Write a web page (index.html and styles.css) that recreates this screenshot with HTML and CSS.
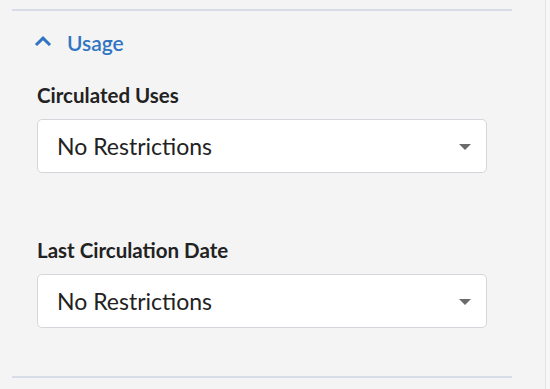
FILE: index.html
```html
<!DOCTYPE html>
<html lang="en">
<head>
    <meta charset="UTF-8">
    <meta name="viewport" content="width=device-width, initial-scale=1.0">
    <title>Usage</title>
    <link rel="stylesheet" href="styles.css">
</head>
<body>
    <div class="page">
        <section class="section">
            <div class="section-title">
                <svg class="chevron" width="18" height="10" viewBox="0 0 18 10">
                    <polyline points="2,9 9,2.2 16,9" fill="none" stroke="#3175c2" stroke-width="3"/>
                </svg>
                <span>Usage</span>
            </div>

            <div class="field">
                <label class="field-label">Circulated Uses</label>
                <div class="select">
                    <span>No Restrictions</span>
                    <span class="caret"></span>
                </div>
            </div>

            <div class="field">
                <label class="field-label">Last Circulation Date</label>
                <div class="select">
                    <span>No Restrictions</span>
                    <span class="caret"></span>
                </div>
            </div>
        </section>
    </div>
</body>
</html>
```

FILE: styles.css
```css
* {
    margin: 0;
    padding: 0;
    box-sizing: border-box;
    font-family: 'Lato', sans-serif;
}

body {
    background: #f7f7f7;
}

.page {
    width: 546px;
    min-height: 100vh;
    background: #f4f4f4;
    border-right: 1px solid #e3e3e3;
    padding: 9px 0 0 12px;
}

.section {
    width: 500px;
    border-top: 2px solid #d6dde6;
    border-bottom: 2px solid #d6dde6;
    padding: 19px 0 48px 0;
}

.section-title {
    display: flex;
    align-items: center;
    gap: 15px;
    padding-left: 22px;
    height: 24px;
    font-size: 21px;
    font-weight: 600;
    color: #3175c2;
    margin-bottom: 30px;
}

.chevron {
    display: block;
    margin-top: -2px;
}

.field {
    padding-left: 25px;
    width: 475px;
}

.field + .field {
    margin-top: 66px;
}

.field-label {
    display: block;
    font-size: 20.5px;
    line-height: 22px;
    font-weight: 700;
    color: #222;
    margin-bottom: 13px;
}

.select {
    height: 54px;
    display: flex;
    align-items: center;
    justify-content: space-between;
    padding: 0 15px 0 19px;
    background: #fff;
    border: 1px solid #d3d7dc;
    border-radius: 5px;
    font-size: 23px;
    color: #222;
}

.caret {
    width: 0;
    height: 0;
    border-left: 6px solid transparent;
    border-right: 6px solid transparent;
    border-top: 6px solid #6b6b6b;
    margin-top: 2px;
}
```
